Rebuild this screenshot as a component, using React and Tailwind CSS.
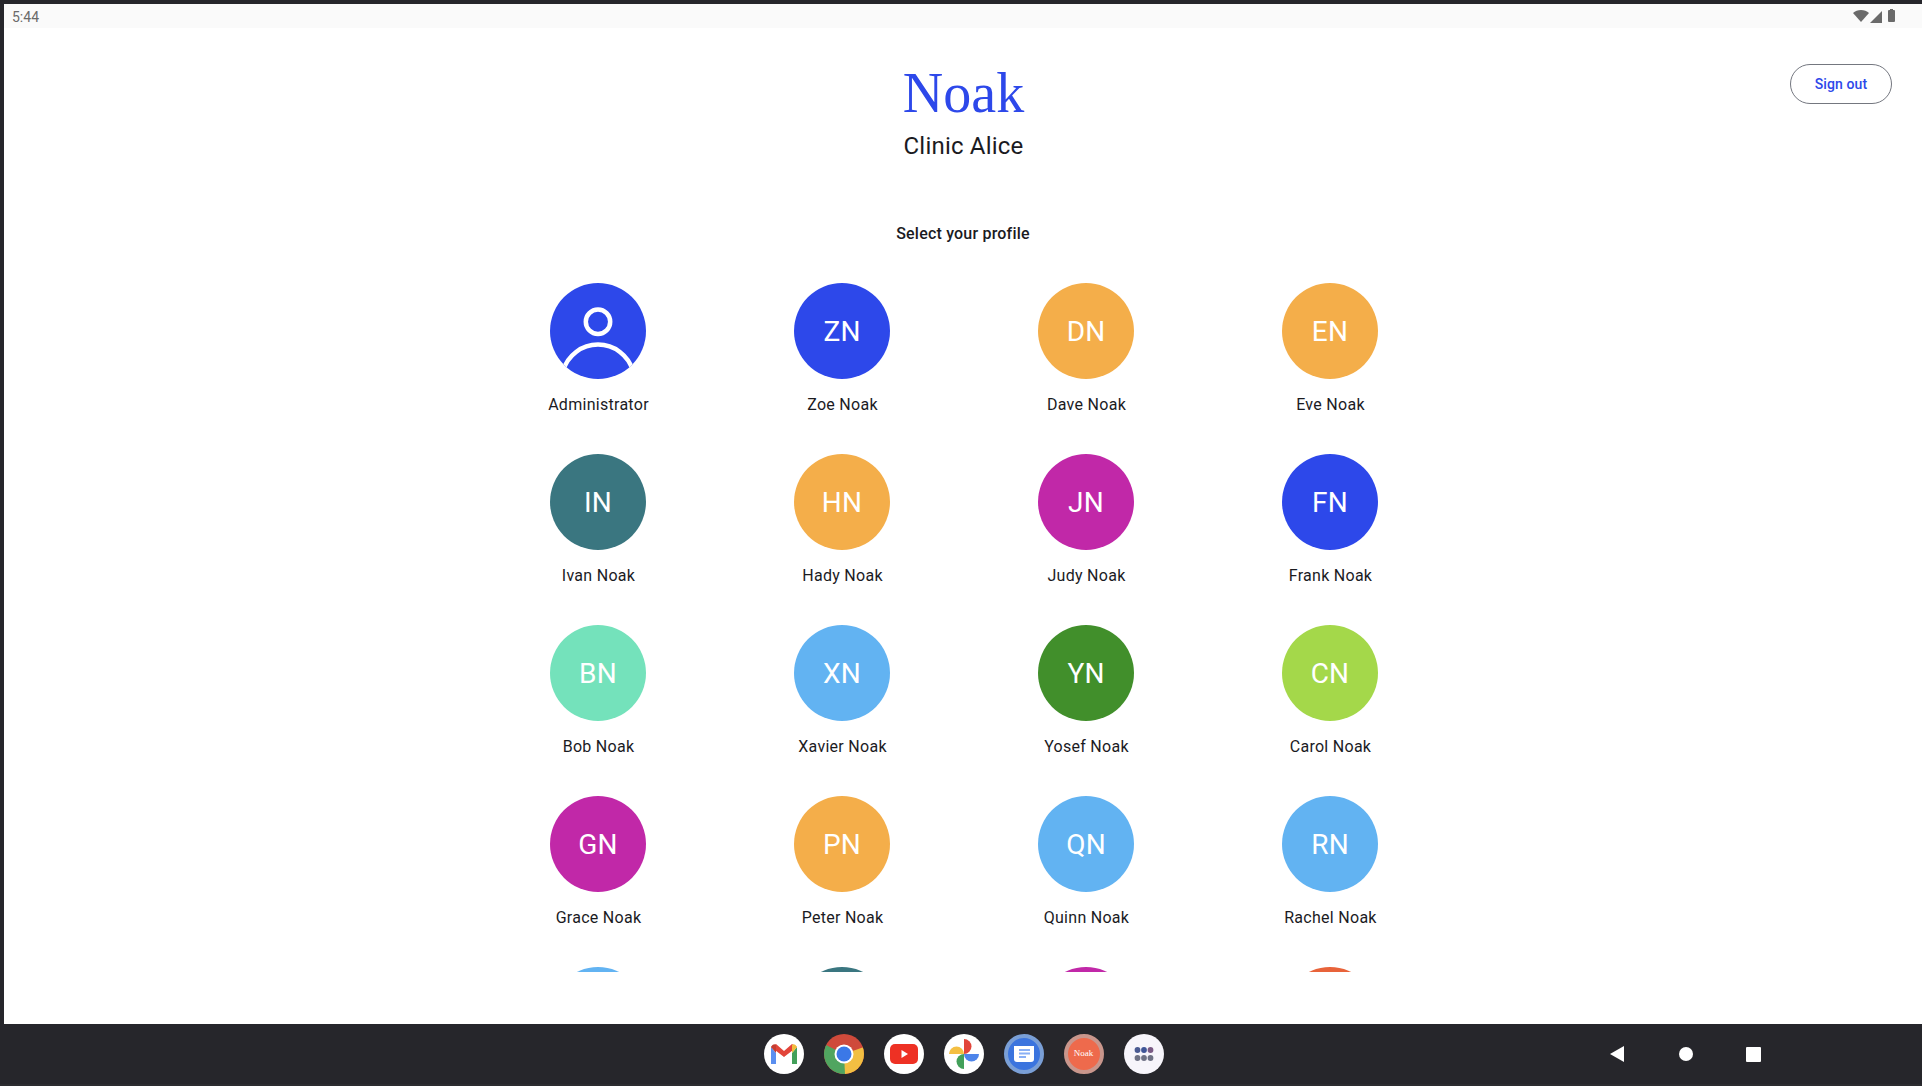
const profiles = [
  ["", "Administrator", "bg-[#2d48ea]"],
  ["ZN", "Zoe Noak", "bg-[#2d48ea]"],
  ["DN", "Dave Noak", "bg-[#f4ae4a]"],
  ["EN", "Eve Noak", "bg-[#f4ae4a]"],
  ["IN", "Ivan Noak", "bg-[#3a7680]"],
  ["HN", "Hady Noak", "bg-[#f4ae4a]"],
  ["JN", "Judy Noak", "bg-[#c128a8]"],
  ["FN", "Frank Noak", "bg-[#2d48ea]"],
  ["BN", "Bob Noak", "bg-[#74e2bb]"],
  ["XN", "Xavier Noak", "bg-[#62b3f2]"],
  ["YN", "Yosef Noak", "bg-[#418f2b]"],
  ["CN", "Carol Noak", "bg-[#a4d84a]"],
  ["GN", "Grace Noak", "bg-[#c128a8]"],
  ["PN", "Peter Noak", "bg-[#f4ae4a]"],
  ["QN", "Quinn Noak", "bg-[#62b3f2]"],
  ["RN", "Rachel Noak", "bg-[#62b3f2]"],
  ["", "", "bg-[#62b3f2]"],
  ["", "", "bg-[#3a7680]"],
  ["", "", "bg-[#c128a8]"],
  ["", "", "bg-[#e8633a]"],
];

function AdminIcon() {
  return (
    <svg viewBox="0 0 96 96" className="w-24 h-24">
      <circle cx="48" cy="38.7" r="12.2" fill="none" stroke="#fff" strokeWidth="4.5" />
      <path d="M13 88 A36.4 36.4 0 0 1 83 88" fill="none" stroke="#fff" strokeWidth="4.5" />
    </svg>
  );
}

function Profile({ initials, name, color, index }) {
  return (
    <div className="flex flex-col items-center h-[171px]">
      <div className={`w-24 h-24 rounded-full overflow-hidden flex items-center justify-center shrink-0 text-white text-[28px] tracking-[0.2px] ${color}`}>
        {index === 0 ? <AdminIcon /> : <div className="pt-[2px]">{initials}</div>}
      </div>
      <div className="mt-[14px] pl-[1px] text-[16px] leading-6 tracking-[0.28px] text-[#1b1b1f]">{name}</div>
    </div>
  );
}

const Dock = ({ className = "bg-white", children }) => (
  <div className={`w-10 h-10 rounded-full flex items-center justify-center overflow-hidden shrink-0 ${className}`}>{children}</div>
);

export default function App() {
  return (
    <div className="w-[1922px] h-[1086px] bg-[#26262b] flex flex-col overflow-hidden font-['Roboto',sans-serif]">
      <div className="flex-1 min-h-0 pt-1 pl-1 flex flex-col">
        <div className="h-6 bg-[#fafafa] shrink-0 flex items-center justify-between pl-[8px] pr-[26px] text-[#6a6a6a] text-[14px]">
          <span className="relative top-[1px]">5:44</span>
          <div className="flex items-center gap-[1px]">
            <svg width="16" height="12" viewBox="0 0 16 12" fill="#6a6a6a"><path d="M0 3 C4 -1 12 -1 16 3 L8 12 Z" /></svg>
            <svg width="13" height="13" viewBox="0 0 13 13" fill="#6a6a6a"><path d="M0 13 L12 1 V13 Z" /></svg>
            <svg width="9" height="13" viewBox="0 0 9 13" fill="#6a6a6a" className="ml-[3px] -mt-[2px]"><path d="M3 0 H6 V1 H7 A1 1 0 0 1 8 2 V12 A1 1 0 0 1 7 13 H2 A1 1 0 0 1 1 12 V2 A1 1 0 0 1 2 1 H3 Z" /></svg>
          </div>
        </div>
        <div className="flex-1 min-h-0 bg-white relative flex flex-col items-center">
          <button className="absolute right-[30px] top-[36px] w-[102px] h-10 rounded-full border border-[#74777f] text-[14px] font-medium tracking-[0.1px] text-[#2d48ea]">Sign out</button>
          <h1 className="mt-[37px] pl-[1px] text-[56px] leading-[56px] text-[#2d48ea] font-['Liberation_Serif',serif]">Noak</h1>
          <div className="mt-[9px] pl-[1px] text-[24px] leading-8 tracking-[0.2px] text-[#1b1b1f]">Clinic Alice</div>
          <div className="mt-[60px] text-[16px] leading-6 font-medium tracking-[0.2px] text-[#1b1b1f]">Select your profile</div>
          <div className="mt-[37px] h-[689px] overflow-hidden w-[976px] relative left-[1px]">
            <div className="grid grid-cols-4">
              {profiles.map(([i, n, c], idx) => (
                <Profile key={idx} initials={i} name={n} color={c} index={idx} />
              ))}
            </div>
          </div>
        </div>
      </div>
      <div className="h-[62px] shrink-0 bg-[#26262b] border-b-2 border-[#2c2c30] relative flex items-center justify-center gap-5 pl-[5px]">
        <Dock>
          <svg viewBox="0 0 40 40" className="w-10 h-10">
            <path d="M7 13 V30 H12 V19 Z" fill="#5b8ff0" />
            <path d="M28 19 V30 H33 V13 Z" fill="#43a05a" />
            <path d="M7 13 L20 23 L33 13 L28 10 L20 17 L12 10 Z" fill="#e2453a" />
            <path d="M33 13 L28 19 V11 Q31 9 33 13 Z" fill="#f3bb3a" />
            <path d="M7 13 L12 19 V11 Q9 9 7 13 Z" fill="#c53e32" />
          </svg>
        </Dock>
        <Dock className="bg-[#cf4a3b]">
          <svg viewBox="0 0 40 40" className="w-10 h-10">
            <path d="M20 20 L2 11 A20 20 0 0 0 22 40 Z" fill="#50a560" />
            <path d="M20 20 L40 13 A20 20 0 0 1 21 40 Z" fill="#f2bf42" />
            <circle cx="20" cy="20" r="9.5" fill="#fff" />
            <circle cx="20" cy="20" r="7.5" fill="#3b78e7" />
          </svg>
        </Dock>
        <Dock>
          <svg viewBox="0 0 40 40" className="w-10 h-10">
            <rect x="6" y="10" width="28" height="20" rx="5" fill="#ee3124" />
            <path d="M17.5 16 L24 20 L17.5 24 Z" fill="#fff" />
          </svg>
        </Dock>
        <Dock>
          <svg viewBox="0 0 40 40" className="w-10 h-10">
            <path d="M20 20 H5 A7.5 7.5 0 0 1 20 20 Z" fill="#f4bf42" />
            <path d="M20 20 V5 A7.5 7.5 0 0 1 20 20 Z" fill="#e2453a" />
            <path d="M20 20 H35 A7.5 7.5 0 0 1 20 20 Z" fill="#4d84ea" />
            <path d="M20 20 V35 A7.5 7.5 0 0 1 20 20 Z" fill="#43a05a" />
          </svg>
        </Dock>
        <Dock className="bg-[#3b74de] border-4 border-[#7a9fd6]">
          <svg viewBox="0 0 32 32" className="w-8 h-8 shrink-0">
            <path d="M6 8 H26 V21 Q26 24 23 24 H9 Q6 24 6 21 Z" fill="#fff" />
            <path d="M11 12 H22 M11 15.5 H22 M11 19 H18" stroke="#8ab0f5" strokeWidth="2" />
          </svg>
        </Dock>
        <Dock className="bg-[#ee6a4c] border-4 border-[#c9968c]">
          <span className="font-['Liberation_Serif',serif] text-[9px] text-white">Noak</span>
        </Dock>
        <Dock className="bg-[#f7f5fb]">
          <svg viewBox="0 0 40 40" className="w-10 h-10">
            <circle cx="13.5" cy="16" r="2.9" fill="#4a5a92" /><circle cx="20" cy="16" r="2.9" fill="#3f5597" /><circle cx="26.5" cy="16" r="2.9" fill="#7a5a85" />
            <circle cx="13.5" cy="24" r="2.9" fill="#6f7285" /><circle cx="20" cy="24" r="2.9" fill="#6f7285" /><circle cx="26.5" cy="24" r="2.9" fill="#6f7285" />
          </svg>
        </Dock>
        <svg className="absolute left-[1610px] top-[22px]" width="15" height="16" viewBox="0 0 15 16" fill="#fff"><path d="M0 8 L14 0 V16 Z" /></svg>
        <div className="absolute left-[1679px] top-[23px] w-[14px] h-[14px] rounded-full bg-white" />
        <div className="absolute left-[1746px] top-[23px] w-[15px] h-[15px] rounded-[1px] bg-white" />
      </div>
    </div>
  );
}
